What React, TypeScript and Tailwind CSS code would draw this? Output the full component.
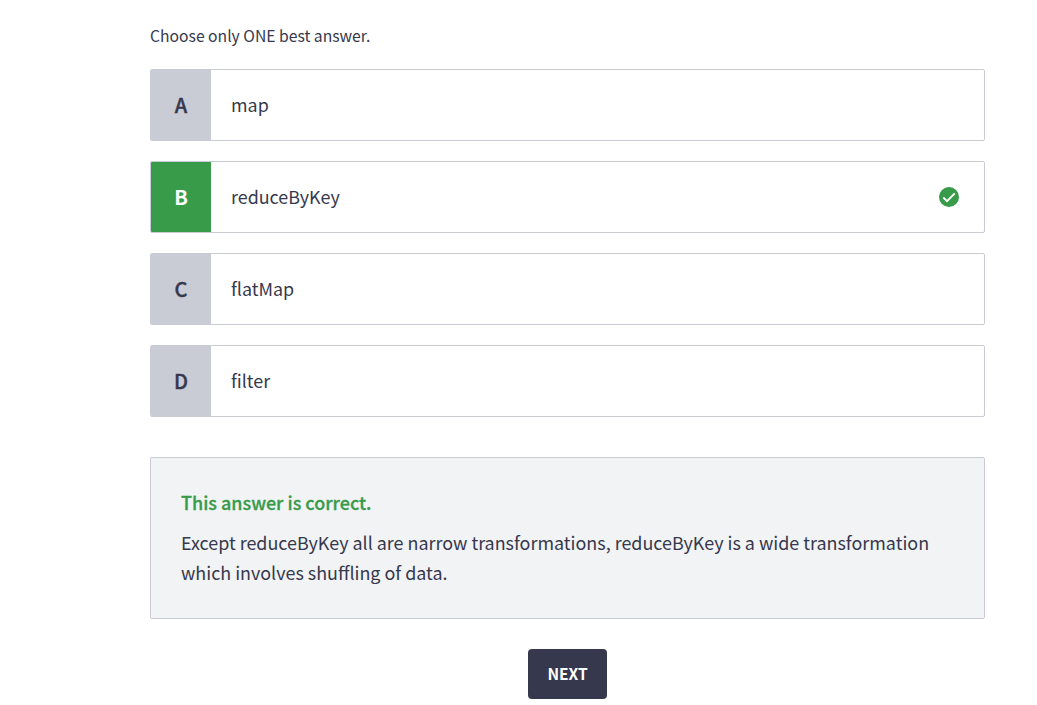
const OPTIONS = [
  { letter: "A", label: "map" },
  { letter: "B", label: "reduceByKey", correct: true },
  { letter: "C", label: "flatMap" },
  { letter: "D", label: "filter" },
];

function CheckBadge() {
  return (
    <svg width="20" height="20" viewBox="0 0 20 20" fill="none" aria-hidden="true">
      <circle cx="10" cy="10" r="10" fill="#389b4a" />
      <path d="M4.3 10.5 8 14.1 15.7 6.4" stroke="#fff" strokeWidth="2" />
    </svg>
  );
}

function Option({ letter, label, correct }: { letter: string; label: string; correct?: boolean }) {
  return (
    <button className="flex h-[72px] w-full items-stretch overflow-hidden rounded-xs border border-[#c9cbd5] bg-white text-left">
      <span
        className={`flex w-[60px] shrink-0 items-center justify-center text-[20px] ${
          correct
            ? "bg-[#389b4a] font-bold text-white"
            : "bg-[#c9cbd5] font-medium text-[#36384d] [-webkit-text-stroke:0.4px]"
        }`}
      >
        {letter}
      </span>
      <span className="flex flex-1 items-center justify-between pr-[25px] pl-5 text-[17.9px]">
        <span className="pb-0.5">{label}</span>
        {correct && <CheckBadge />}
      </span>
    </button>
  );
}

export default function App() {
  return (
    <main className="h-[705px] overflow-hidden bg-white pt-6 pl-[150px] font-['Noto_Sans_CJK_SC',sans-serif] text-[#36384d]">
      <div className="flex w-[835px] flex-col">
        <p className="text-[15.7px] leading-6">Choose only ONE best answer.</p>
        <div className="mt-[21px] flex flex-col gap-5">
          {OPTIONS.map((o) => (
            <Option key={o.letter} {...o} />
          ))}
        </div>
        <section className="mt-10 h-[162px] rounded-xs border border-[#c9cbd5] bg-[#f1f3f5] px-[30px] pt-[29px] text-[17.91px] leading-[30px]">
          <h2 className="mb-[10px] text-[17.98px] font-medium text-[#389b4a] [-webkit-text-stroke:0.3px]">
            This answer is correct.
          </h2>
          <p>
            Except reduceByKey all are narrow transformations, reduceByKey is a wide transformation
            which involves shuffling of data.
          </p>
        </section>
        <button className="mt-[30px] h-[50px] w-[79px] self-center rounded bg-[#36384d] text-[15.5px] font-bold text-white">
          NEXT
        </button>
      </div>
    </main>
  );
}
